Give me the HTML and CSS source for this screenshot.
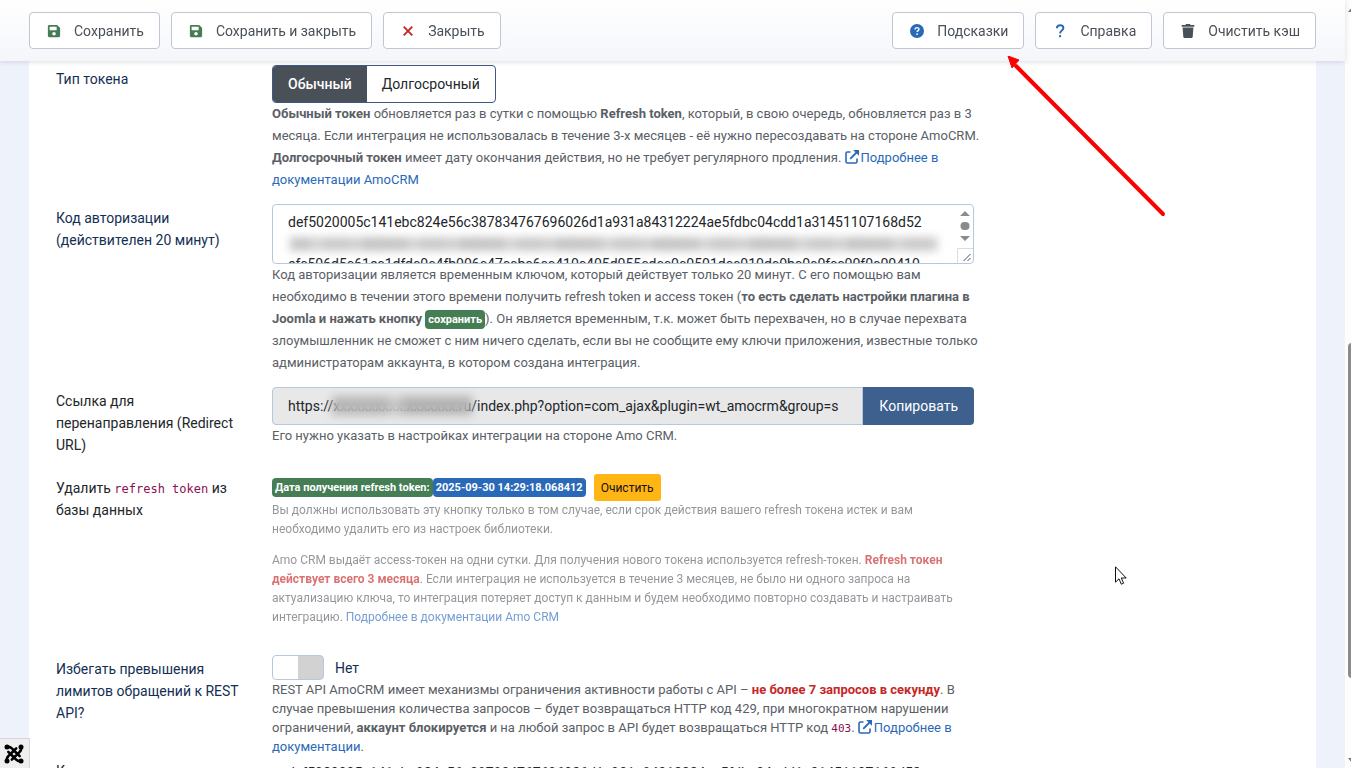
FILE: index.html
```html
<!DOCTYPE html>
<html lang="ru">
<head>
<meta charset="utf-8">
<title>Настройки плагина AmoCRM</title>
<link rel="stylesheet" href="styles.css">
</head>
<body>
<svg class="sprite" aria-hidden="true">
  <symbol id="i-save" viewBox="0 0 448 512"><path d="M433.900 129.900l-83.900-83.900A48 48 0 0 0 316.100 32H48C21.500 32 0 53.500 0 80v352c0 26.500 21.500 48 48 48h352c26.500 0 48-21.500 48-48V163.900a48 48 0 0 0-14.100-34zM224 416c-35.300 0-64-28.700-64-64s28.700-64 64-64 64 28.700 64 64-28.700 64-64 64zm96-304.500V212c0 6.600-5.400 12-12 12H76c-6.600 0-12-5.400-12-12V108c0-6.600 5.400-12 12-12h228.500c3.200 0 6.200 1.300 8.500 3.500l3.500 3.500a12 12 0 0 1 3.500 8.500z"/></symbol>
  <symbol id="i-external" viewBox="0 0 14 14"><path d="M5.500 2H2.500A1.500 1.500 0 0 0 1 3.500v8A1.500 1.500 0 0 0 2.500 13h8a1.500 1.500 0 0 0 1.500-1.500V8.500" fill="none" stroke="currentColor" stroke-width="1.600"/><path d="M5.200 8.800 11.500 2.500" stroke="currentColor" stroke-width="1.800"/><path d="M8.200 0H14v5.800z"/></symbol>
</svg>

<header class="toolbar">
  <div class="toolbar-group">
    <button class="tool green" type="button"><svg class="icon" aria-hidden="true"><use href="#i-save"/></svg><span>Сохранить</span></button>
    <button class="tool green" type="button"><svg class="icon" aria-hidden="true"><use href="#i-save"/></svg><span>Сохранить и закрыть</span></button>
    <button class="tool red" type="button"><svg class="icon" viewBox="0 0 14 14" aria-hidden="true"><path d="M2.700 2.700l8.600 8.600M11.300 2.700l-8.600 8.600" stroke="currentColor" stroke-width="1.900"/></svg><span>Закрыть</span></button>
  </div>
  <div class="toolbar-group">
    <button class="tool blue" type="button"><svg class="icon" viewBox="0 0 14 14" aria-hidden="true"><circle cx="7" cy="7" r="7"/><path d="M5.100 5.400c0-2.500 3.900-2.300 3.900-.2 0 1.400-1.900 1.400-1.900 2.900M7.100 9.300v1.600" fill="none" stroke="#fff" stroke-width="1.400"/></svg><span>Подсказки</span></button>
    <button class="tool blue" type="button"><svg class="icon" viewBox="0 0 14 14" aria-hidden="true"><path d="M3.800 4.300c.3-4.200 6.600-3.900 6.600-.3 0 2.600-3.300 2.400-3.300 5.400M7.100 11v2.200" fill="none" stroke="currentColor" stroke-width="1.900"/></svg><span>Справка</span></button>
    <button class="tool dark" type="button"><svg class="icon" viewBox="0 0 14 14" aria-hidden="true"><path d="M.7 1h3.700l.6-1h4l.6 1h3.700v1.700H.7zM1.600 3.500h10.800l-.7 9.300a1.300 1.300 0 0 1-1.300 1.200H3.600a1.300 1.300 0 0 1-1.300-1.200z"/></svg><span>Очистить кэш</span></button>
  </div>
</header>

<main class="page">
  <form class="card">
    <div class="row" role="radiogroup" aria-labelledby="token-type">
      <div class="label" id="token-type">Тип токена</div>
      <div class="control">
        <div class="segmented">
          <label><input type="radio" name="token" checked><span>Обычный</span></label>
          <label><input type="radio" name="token"><span>Долгосрочный</span></label>
        </div>
        <p class="help"><b>Обычный токен</b> обновляется раз в сутки с помощью <b>Refresh token</b>, который, в свою очередь, обновляется раз в 3 месяца. Если интеграция не использовалась в течение 3-х месяцев - её нужно пересоздавать на стороне AmoCRM. <br><b>Долгосрочный токен</b> имеет дату окончания действия, но не требует регулярного продления. <a href="#"><svg class="ext" aria-hidden="true"><use href="#i-external"/></svg>Подробнее в документации AmoCRM</a></p>
      </div>
    </div>

    <div class="row">
      <label class="label" for="code">Код авторизации (действителен 20 минут)</label>
      <div class="control">
        <div class="code-box">
          <textarea id="code" rows="2" spellcheck="false">def5020005c141ebc824e56c387834767696026d1a931a84312224ae5fdbc04cdd1a31451107168d52

efc506d5c61ec1dfdc0c4fb006c47ccbc6cc410c405d055cdcc0c0501dcc010dc0bc0c0fcc00f0c00410</textarea>
          <span class="smudge smudge-code" aria-hidden="true"></span>
          <svg class="mini-scroll" viewBox="0 0 16 58" aria-hidden="true"><path d="M3 11l5-5 5 5zM3 31h10l-5 5z" fill="#8b8b8b"/><rect x="3.500" y="17" width="9" height="8" rx="4" fill="#8b8b8b"/><path d="M.5 58V43.500H16" fill="none" stroke="#dcdcdc"/><path d="M6.500 56l7-7M10.500 56l3-3" stroke="#555"/></svg>
        </div>
        <p class="help">Код авторизации является временным ключом, который действует только 20 минут. С его помощью вам необходимо в течении этого времени получить refresh token и access токен (<b>то есть сделать настройки плагина в Joomla и нажать кнопку <span class="badge">сохранить</span></b>). Он является временным, т.к. может быть перехвачен, но в случае перехвата злоумышленник не сможет с ним ничего сделать, если вы не сообщите ему ключи приложения, известные только администраторам аккаунта, в котором создана интеграция.</p>
      </div>
    </div>

    <div class="row">
      <label class="label plain" for="redirect">Ссылка для перенаправления (Redirect URL)</label>
      <div class="control">
        <div class="input-group">
          <div class="url-box">
            <input id="redirect" type="text" readonly value="https://xxxxxxxxxx.xxxxxxx.ru/index.php?option=com_ajax&amp;plugin=wt_amocrm&amp;group=s">
            <span class="smudge smudge-url" aria-hidden="true"></span>
          </div>
          <button class="copy" type="button">Копировать</button>
        </div>
        <p class="help">Его нужно указать в настройках интеграции на стороне Amo CRM.</p>
      </div>
    </div>

    <div class="row">
      <div class="label plain">Удалить <code>refresh token</code> из базы данных</div>
      <div class="control">
        <div class="token-date"><span class="badge">Дата получения refresh token:</span><span class="badge info">2025-09-30 14:29:18.068412</span><button class="clear" type="button">Очистить</button></div>
        <div class="muted">
          <p>Вы должны использовать эту кнопку только в том случае, если срок действия вашего refresh токена истек и вам необходимо удалить его из настроек библиотеки.</p>
          <p>Amo CRM выдаёт access-токен на одни сутки. Для получения нового токена используется refresh-токен. <b class="danger">Refresh токен действует всего 3 месяца</b>. Если интеграция не используется в течение 3 месяцев, не было ни одного запроса на актуализацию ключа, то интеграция потеряет доступ к данным и будем необходимо повторно создавать и настраивать интеграцию. <a href="#">Подробнее в документации Amo CRM</a></p>
        </div>
      </div>
    </div>

    <div class="row">
      <label class="label" for="limits">Избегать превышения лимитов обращений к REST API?</label>
      <div class="control">
        <div class="switch-line"><input class="switch" id="limits" type="checkbox" role="switch"><label for="limits">Нет</label></div>
        <p class="help tight">REST API AmoCRM имеет механизмы ограничения активности работы с API – <b class="danger">не более 7 запросов в секунду</b>. В случае превышения количества запросов – будет возвращаться HTTP код 429, при многократном нарушении ограничений, <b>аккаунт блокируется</b> и на любой запрос в API будет возвращаться HTTP код <code>403</code>. <a href="#"><svg class="ext" aria-hidden="true"><use href="#i-external"/></svg>Подробнее в документации</a>.</p>
      </div>
    </div>

    <div class="row last">
      <div class="label plain">Код авторизации</div>
      <div class="control">def5020005c141ebc824e56c387834767696026d1a931a84312224ae5fdbc04cdd1a31451107168d52</div>
    </div>
  </form>
</main>

<button class="joomla" type="button" aria-label="Joomla"><svg viewBox="0 0 20 20" aria-hidden="true"><g fill="none" stroke="#000" stroke-width="2.600" stroke-linecap="round" stroke-linejoin="round"><path d="M3 3c2-.5 3.500 0 4.800 1.300L13 9.500M17 3c.5 2 0 3.500-1.300 4.800L10.500 13M17 17c-2 .5-3.500 0-4.800-1.300L7 10.500M3 17c-.5-2 0-3.500 1.300-4.800L9.500 7"/><path d="M4.300 7.800 7 10.500M12.200 4.300 9.500 7M15.700 12.200 13 9.500M7.800 15.700l2.700-2.700"/></g><g><circle cx="3" cy="3" r="2.500"/><circle cx="17" cy="3" r="2.500"/><circle cx="17" cy="17" r="2.500"/><circle cx="3" cy="17" r="2.500"/></g></svg></button>
<div class="page-scroll" aria-hidden="true"><i class="up"></i><i class="thumb"></i><i class="down"></i></div>
<svg class="arrow" viewBox="0 0 160 164" aria-hidden="true"><path d="M9 10 156 158" stroke="#fb0000" stroke-width="4" stroke-linecap="round"/><path d="M1 0 12 4 5 12z" fill="#fb0000" stroke="#fb0000"/></svg>
<svg class="cursor" viewBox="0 0 12 19" aria-hidden="true"><path d="M.5.800v15.400l3.500-3.400 2.300 5.400 2.300-1-2.300-5.200h4.900z" fill="#fff" stroke="#111"/></svg>
</body>
</html>
```
FILE: styles.css
```css
* { box-sizing: border-box; }
body {
  margin: 0;
  height: 100vh;
  overflow: hidden;
  display: flex;
  flex-direction: column;
  background: #fdfdfe;
  font: 14px/22px Roboto, sans-serif;
  color: #22262a;
}
button, input, textarea { font: inherit; color: inherit; }
p { margin: 0; }
a { color: #2a69b8; text-decoration: none; }
code { font-family: "DejaVu Sans Mono", monospace; font-size: 12px; line-height: 1; color: #8a104e; }
.sprite { position: absolute; width: 0; height: 0; }

.toolbar {
  position: relative;
  z-index: 1;
  display: flex;
  justify-content: space-between;
  padding: 12px 29px;
  margin-right: 6px;
  background: linear-gradient(#fff, #f4f6fa);
  box-shadow: 0 1px 5px rgba(40, 50, 80, .16);
}
.toolbar-group { display: flex; gap: 11px; }
.tool {
  display: flex;
  align-items: center;
  gap: 11px;
  height: 37px;
  padding: 0 15px;
  border: 1px solid #c1c7d2;
  border-radius: 4px;
  background: #fff;
}
.tool span { color: #495057; }
.icon { width: 18px; height: 14px; fill: currentColor; }
.green { color: #457d54; }
.red { color: #c52827; }
.blue { color: #2a69b8; }
.dark { color: #495057; }

.page { flex: 1; min-height: 0; padding: 0 29px; margin-right: 6px; background: #eef2fb; }
.card {
  height: 100%;
  overflow: hidden;
  padding: 4px 27px 0;
  background: #fff;
  display: flex;
  flex-direction: column;
  gap: 13px;
}
.row {
  flex: none;
  display: grid;
  grid-template-columns: 190px minmax(0, 702px);
  column-gap: 26px;
}
.label { padding: 3px 0 5px; color: #132f53; }
.plain { color: #22262a; }
.help { margin-right: -10px; font-size: 13px; color: #5a6066; }
.tight { line-height: 19px; }
.danger { color: #c52827; }
.help code { font-size: 11px; }
.ext { width: 14px; height: 14px; fill: currentColor; vertical-align: -2px; margin-right: 2px; }
.last { margin-top: -12px; }
.last .control { padding: 5px 15px 0; }

.segmented { display: flex; width: fit-content; height: 38px; border: 1px solid #3d5a86; border-radius: 4px; overflow: hidden; }
.segmented label { display: flex; }
.segmented input { position: absolute; opacity: 0; }
.segmented span { padding: 7px 15px; }
.segmented input:checked + span { background: #495057; color: #fff; font-weight: 500; }

.code-box { position: relative; height: 60px; }
textarea {
  display: block;
  width: 100%;
  height: 60px;
  padding: 7px 24px 7px 15px;
  border: 1px solid #b5c8de;
  border-radius: 4px;
  line-height: 21px;
  resize: none;
  overflow: hidden;
  white-space: pre;
}
.mini-scroll { position: absolute; right: 1px; top: 1px; width: 16px; height: 58px; }
.smudge { position: absolute; filter: blur(4px); }
.smudge-code { left: 18px; right: 36px; top: 33px; height: 14px; background: repeating-linear-gradient(90deg, #c6c6c6 0 19px, #d6d6d6 23px 31px, #cacaca 34px 58px, #d2d2d2 61px 70px, #c4c4c4 74px 97px); }
.smudge-url { left: 60px; width: 140px; top: 9px; height: 19px; background: repeating-linear-gradient(90deg, #b8b8b8 0 54px, #cbcbcb 60px 66px, #b4b4b4 72px 140px); }

.badge { display: inline-block; padding: 4px 3px; border-radius: 4px; background: #457d54; color: #fff; font-size: 11px; font-weight: 700; line-height: 11px; }
.info { background: #2a69b8; }

.input-group { display: flex; height: 38px; }
.url-box { position: relative; flex: 1; display: flex; }
.url-box input { width: 100%; padding: 0 15px; border: 1px solid #b5c8de; border-radius: 4px 0 0 4px; background: #e8e8e8; outline: 0; }
.copy { padding: 0 16px; border: 0; border-radius: 0 4px 4px 0; background: #3e608f; color: #fff; }

.token-date { display: flex; align-items: center; height: 27px; }
.clear { height: 27px; margin-left: 8px; padding: 0 7px; border: 0; border-radius: 3px; background: #ffb514; color: #111; font-size: 12px; }
.muted { display: grid; gap: 12px; padding-bottom: 15px; font-size: 12px; line-height: 19px; opacity: .65; color: #5a6066; }

.switch-line { display: flex; align-items: center; gap: 11px; height: 25px; color: #132f53; }
.switch { appearance: none; width: 52px; height: 25px; margin: 0; border: 1px solid #b5c8de; border-radius: 4px; background: linear-gradient(90deg, #fff 50%, #d2d2d2 50%); }

.joomla { position: fixed; left: 0; bottom: 0; width: 30px; height: 30px; padding: 4px; border: 1px solid #d6d6d6; border-width: 1px 1px 0 0; background: #efefef; }
.joomla svg { display: block; width: 20px; height: 20px; }
.page-scroll { position: fixed; top: 0; right: 0; bottom: 0; width: 3px; overflow: hidden; }
.page-scroll i { position: absolute; left: 0; }
.thumb { top: 343px; width: 9px; height: 335px; border-radius: 4px; background: #8b8b8b; }
.up { top: 7px; border: 4px solid transparent; border-top: 0; border-bottom: 5px solid #777; }
.down { bottom: 5px; border: 4px solid transparent; border-bottom: 0; border-top: 5px solid #777; }
.arrow { position: absolute; z-index: 2; left: 1007px; top: 56px; width: 160px; height: 164px; pointer-events: none; }
.cursor { position: absolute; z-index: 2; left: 1115px; top: 566px; width: 12px; height: 19px; pointer-events: none; }
```
